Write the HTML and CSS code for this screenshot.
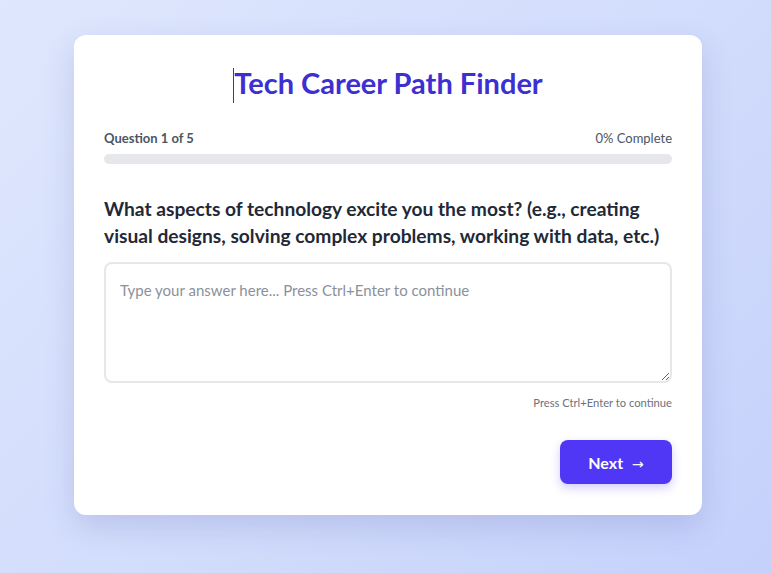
FILE: index.html
```html
<!DOCTYPE html>
<html lang="en">
<head>
<meta charset="utf-8">
<title>Tech Career Path Finder</title>
<link rel="stylesheet" href="styles.css">
</head>
<body>
<main class="card">
  <h1 class="title"><span class="caret"></span>Tech Career Path Finder</h1>
  <div class="progress-info">
    <span class="q-count">Question 1 of 5</span>
    <span class="pct">0% Complete</span>
  </div>
  <div class="bar"><div class="bar-fill" style="width:0%"></div></div>
  <h2 class="question">What aspects of technology excite you the most? (e.g., creating visual designs, solving complex problems, working with data, etc.)</h2>
  <textarea class="answer" placeholder="Type your answer here... Press Ctrl+Enter to continue"></textarea>
  <p class="hint">Press Ctrl+Enter to continue</p>
  <div class="actions">
    <button class="next">Next <span class="arrow">→</span></button>
  </div>
</main>
</body>
</html>
```

FILE: styles.css
```css
* { box-sizing: border-box; }
html, body { height: 100%; }
body {
  margin: 0;
  font-family: "Lato", "Open Sans", sans-serif;
  background: linear-gradient(135deg, #dfe7fd 0%, #d3ddfc 50%, #c5d1fb 100%);
  display: flex;
  justify-content: center;
  align-items: flex-start;
  padding: 35px 0 0 5px;
}
.card {
  width: 628px;
  background: #fff;
  border-radius: 12px;
  padding: 30px 30px 31px;
  box-shadow: 0 12px 30px rgba(70, 80, 160, 0.18);
}
.title {
  position: relative;
  margin: 0;
  text-align: center;
  font-size: 29px;
  line-height: 36px;
  font-weight: 700;
  color: #3d2fd0;
}
.caret {
  display: inline-block;
  width: 1px;
  height: 35px;
  background: #3d2fd0;
  vertical-align: -9px;
}
.progress-info {
  margin-top: 26px;
  display: flex;
  justify-content: space-between;
  font-size: 13px;
  line-height: 18px;
  color: #4b5563;
}
.q-count { font-weight: 700; }
.bar {
  margin-top: 7px;
  height: 10px;
  border-radius: 5px;
  background: #e5e7eb;
  overflow: hidden;
}
.bar-fill { height: 100%; background: #4f3df0; }
.question {
  margin: 31px 0 0;
  font-size: 19.2px;
  line-height: 27px;
  font-weight: 700;
  color: #1f2937;
}
.answer {
  display: block;
  width: 100%;
  height: 121px;
  margin-top: 13px;
  padding: 16px 14px;
  border: 2px solid #e5e7eb;
  border-radius: 8px;
  font-family: inherit;
  font-size: 15px;
  line-height: 20px;
  color: #1f2937;
  resize: vertical;
}
.answer::placeholder { color: #8b919b; }
.hint {
  margin: 11px 0 0;
  text-align: right;
  font-size: 11.2px;
  line-height: 17px;
  color: #6b7280;
}
.actions {
  margin-top: 29px;
  display: flex;
  justify-content: flex-end;
}
.next {
  width: 112px;
  height: 44px;
  border: none;
  border-radius: 8px;
  background: #5037f5;
  color: #fff;
  font-family: inherit;
  font-size: 16px;
  font-weight: 700;
  box-shadow: 0 4px 10px rgba(80, 55, 245, 0.25);
  cursor: pointer;
}
.arrow { margin-left: 5px; font-weight: 400; font-size: 14px; font-family: "DejaVu Sans", sans-serif; }
```
